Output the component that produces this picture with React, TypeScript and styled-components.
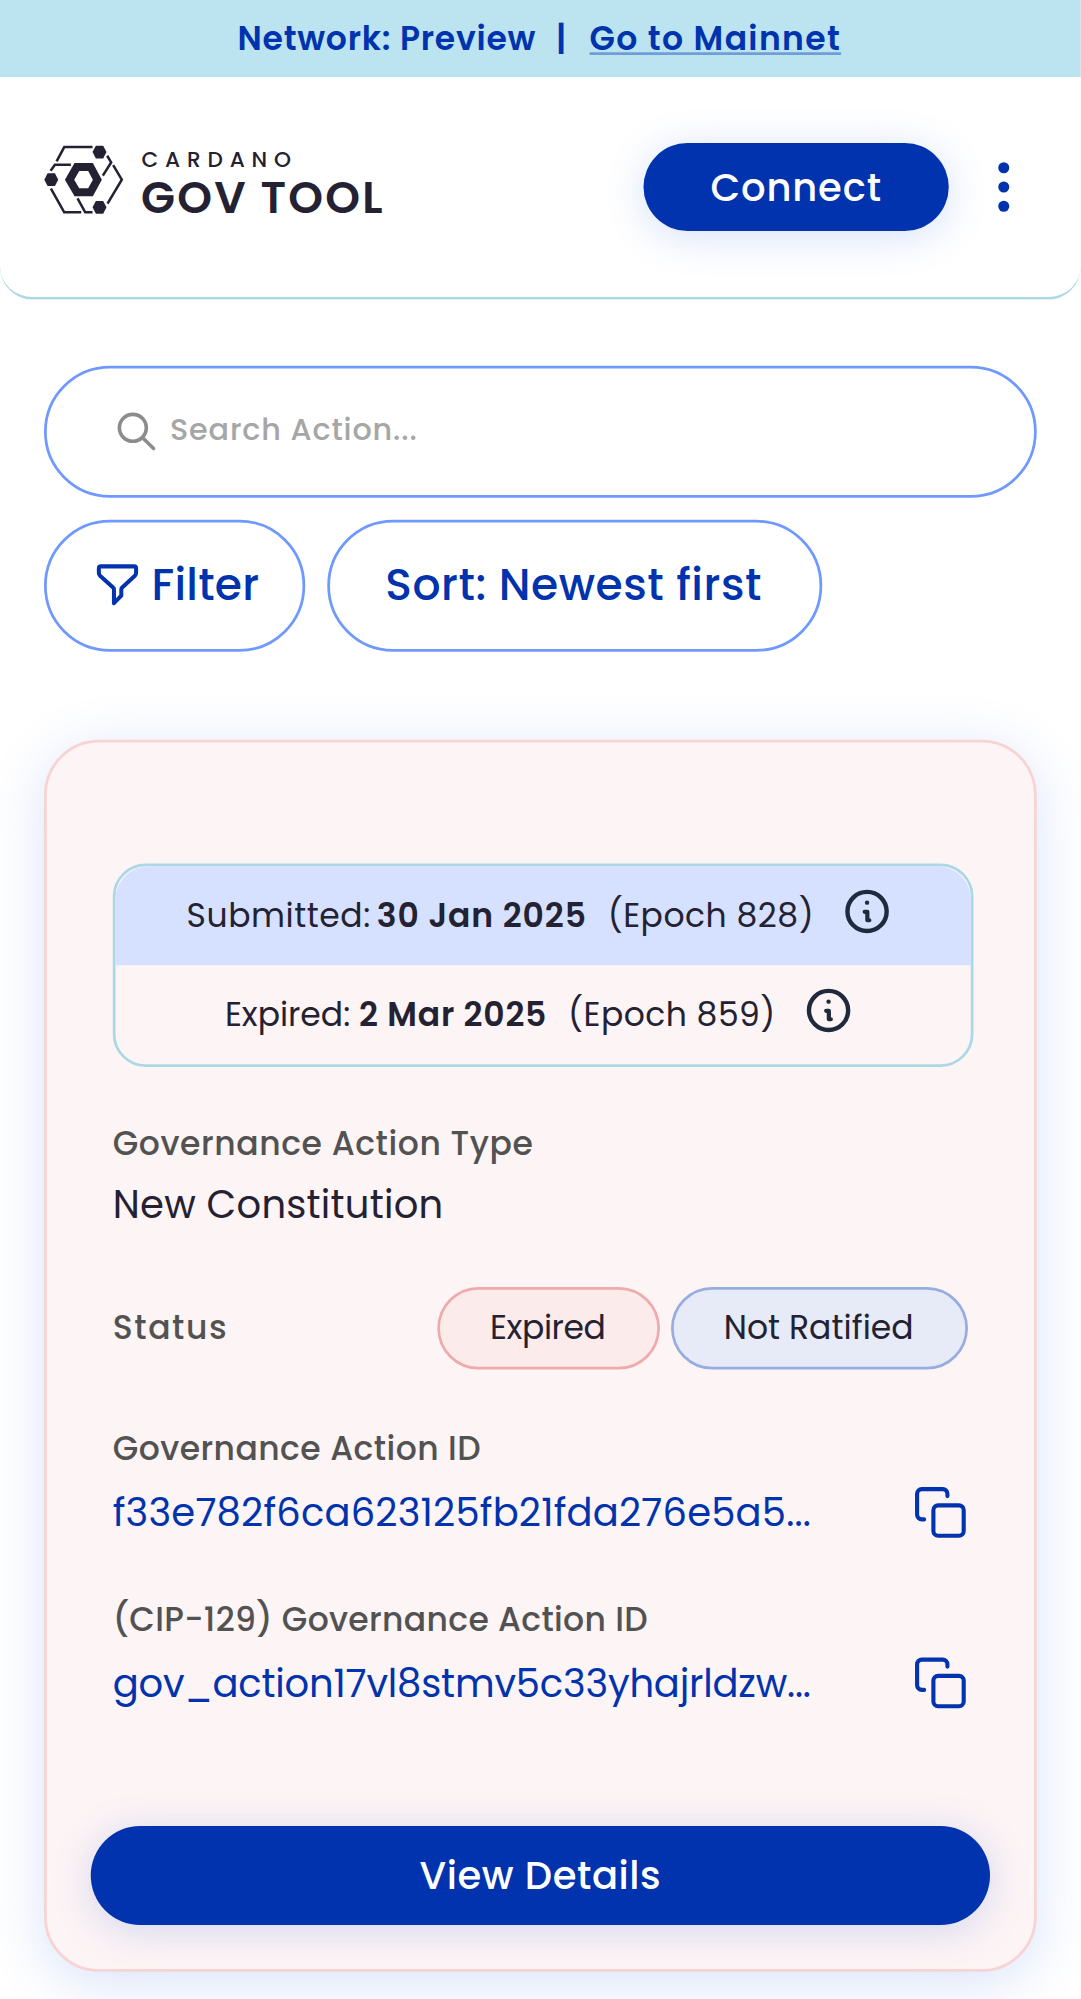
import React from "react";
import styled, { createGlobalStyle } from "styled-components";

const color = {
  primary: "#0033ad",
  ink: "#242232",
  label: "#525252",
  outline: "#6f99ff",
  sky: "#bbe4f0",
  skyBorder: "#aad9e5",
};

const GlobalStyle = createGlobalStyle`
  * { box-sizing: border-box; }
  html, body { margin: 0; padding: 0; background: #fff; }
  body {
    font-family: Poppins, Inter, "Open Sans", sans-serif;
    font-feature-settings: "cv11";
    color: ${color.ink};
  }
  button { font: inherit; font-feature-settings: inherit; border: 0; background: none; padding: 0; margin: 0; }
  svg { display: block; flex: none; overflow: visible; }
`;

const Viewport = styled.div`
  width: 1081px;
  height: 1999px;
  overflow: hidden;
`;

/* A 393px wide phone layout shown at 2.75 device pixels per pixel. */
const Page = styled.div`
  width: 393px;
  height: 727px;
  transform: scale(2.75);
  transform-origin: 0 0;
  background: #fff;
  font-size: 12px;
  line-height: 17px;
`;

/* Inline text with its own tracking. */
const Tracked = styled.span<{ $spacing: number }>`
  letter-spacing: ${(p) => p.$spacing}px;
  white-space: nowrap;
`;

const Banner = styled.div`
  display: flex;
  align-items: center;
  justify-content: center;
  height: 28px;
  padding: 0 0.8px 1px 0;
  background: ${color.sky};
  color: ${color.primary};
  font-weight: 600;
`;

const BannerLink = styled.a`
  letter-spacing: 0.49px;
  white-space: nowrap;
  text-decoration: underline;
  text-decoration-color: rgba(0, 51, 173, 0.4);
  text-decoration-skip-ink: none;
`;

const BannerDivider = styled.span`
  margin: 0 8.5px 0 7.2px;
`;

const Header = styled.header`
  display: flex;
  align-items: center;
  height: 81px;
  padding: 0 26px 0 16px;
  border-bottom: 1px solid ${color.skyBorder};
  border-radius: 0 0 12px 12px;
`;

const Logo = styled.div`
  align-self: flex-start;
  margin-right: auto;
  padding-top: 25px;
`;

const SolidButton = styled.button<{ $width: number; $height: number }>`
  width: ${(p) => p.$width}px;
  height: ${(p) => p.$height}px;
  border-radius: 50px;
  background: ${color.primary};
  color: #fff;
  font-size: 14px;
  line-height: 20px;
  font-weight: 500;
  box-shadow: 0 2px 15px rgba(47, 98, 220, 0.2);
`;

const MenuButton = styled.button`
  display: flex;
  flex-direction: column;
  align-items: center;
  gap: 3px;
  width: 4px;
  margin-left: 18px;
`;

const Dot = styled.span`
  width: 4px;
  height: 4px;
  border-radius: 50%;
  background: ${color.primary};
`;

const Main = styled.main`
  padding: 24px 16px 0;
`;

const SearchBox = styled.div`
  display: flex;
  align-items: center;
  gap: 4.9px;
  height: 48px;
  padding-left: 25.4px;
  border: 1px solid ${color.outline};
  border-radius: 24px;
`;

const Placeholder = styled.span`
  padding-bottom: 2px;
  color: #a6a6a6;
  font-size: 11px;
  line-height: 16px;
  font-weight: 500;
  letter-spacing: 0.31px;
`;

const Toolbar = styled.div`
  display: flex;
  gap: 8px;
  margin-top: 8px;
`;

const OutlineButton = styled.button<{ $width: number; $spacing: number; $padding: string }>`
  display: flex;
  align-items: center;
  justify-content: center;
  gap: 5.6px;
  width: ${(p) => p.$width}px;
  height: 48px;
  padding: ${(p) => p.$padding};
  border: 1px solid ${color.outline};
  border-radius: 24px;
  color: ${color.primary};
  font-size: 16px;
  line-height: 23px;
  font-weight: 500;
  letter-spacing: ${(p) => p.$spacing}px;
  white-space: nowrap;
  svg {
    margin-bottom: 1px;
  }
`;

const OutlineLabel = styled.span`
  padding-bottom: 1px;
`;

const Card = styled.article`
  height: 448px;
  margin-top: 32px;
  border: 1px solid #f7d4d3;
  border-radius: 20px;
  background: #fdf4f5;
  box-shadow: 0 4px 20px rgba(47, 98, 220, 0.18);
`;

const CardBody = styled.div`
  padding: 44px 22px 0 24px;
`;

const CardFooter = styled.div`
  padding: 42px 16px 0;
`;

const Dates = styled.div`
  height: 74px;
  border: 1px solid ${color.skyBorder};
  border-radius: 12px;
`;

const DateRow = styled.div<{ $filled?: boolean }>`
  display: flex;
  align-items: center;
  justify-content: center;
  height: 36px;
  padding: 0 4.2px 1px 0;
  border-radius: ${(p) => (p.$filled ? "12px 12px 0 0" : "0")};
  background: ${(p) => (p.$filled ? "#d6e1ff" : "transparent")};
  svg {
    margin-bottom: 2.5px;
  }
`;

const DateLabel = styled(Tracked)<{ $gap: number }>`
  margin-right: ${(p) => p.$gap}px;
`;

const DateValue = styled(Tracked)`
  margin-right: 7.6px;
  font-weight: 600;
`;

const Epoch = styled(Tracked)`
  margin-right: 10.9px;
`;

const Field = styled.section<{ $top: number }>`
  margin-top: ${(p) => p.$top}px;
`;

const Label = styled.div<{ $spacing: number }>`
  color: ${color.label};
  font-weight: 500;
  letter-spacing: ${(p) => p.$spacing}px;
  white-space: nowrap;
`;

const Value = styled.div<{ $spacing: number; $link?: boolean }>`
  color: ${(p) => (p.$link ? color.primary : color.ink)};
  font-size: 14px;
  line-height: 20px;
  letter-spacing: ${(p) => p.$spacing}px;
  white-space: nowrap;
`;

const ValueRow = styled.div<{ $gap: number }>`
  display: flex;
  align-items: center;
  justify-content: space-between;
  height: 20px;
  margin-top: ${(p) => p.$gap}px;
  padding-right: 2px;
`;

const StatusRow = styled.section`
  display: flex;
  align-items: center;
  gap: 4px;
  height: 30px;
  margin-top: 20px;
  padding-right: 2px;
  & > :first-child {
    margin-right: auto;
    padding-bottom: 1px;
  }
`;

const Pill = styled.span<{ $tone: "red" | "blue"; $width: number; $spacing: number }>`
  display: flex;
  align-items: center;
  justify-content: center;
  width: ${(p) => p.$width}px;
  height: 30px;
  padding-bottom: 1px;
  padding-right: 0.6px;
  border: 1px solid ${(p) => (p.$tone === "red" ? "#efabab" : "#98addf")};
  border-radius: 15px;
  background: ${(p) => (p.$tone === "red" ? "#fbebea" : "#e6ebf7")};
  letter-spacing: ${(p) => p.$spacing}px;
  white-space: nowrap;
`;

const hexagon = (cx: number, cy: number) =>
  `${cx - 21},${cy} ${cx - 11},${cy - 19} ${cx + 11},${cy - 19} ${cx + 21},${cy} ${cx + 11},${cy + 19} ${cx - 11},${cy + 19}`;

const LogoArt = () => (
  <svg width="124" height="24.7" viewBox="42 48 1023 204" fill="none">
    <path
      d="M133 100h55l27 50-27 50h-55l-29-50zM147 124l-15 26 15 26h27l14-26-14-26z"
      fill={color.ink}
      fillRule="evenodd"
    />
    <polygon points={hexagon(63, 150)} fill={color.ink} />
    <polygon points={hexagon(208, 67)} fill={color.ink} />
    <polygon points={hexagon(208, 233)} fill={color.ink} />
    <path
      d="M79 95l23-43h85M61 123l13-18h48M62 177l40 71h51M142 206l23 42h22M231 78l12 20-25 40M249 106l26 44-43 72"
      stroke={color.ink}
      strokeWidth="7.6"
    />
    <text x="334" y="111" fontSize="65" fontWeight="500" letterSpacing="20.6" fill={color.ink}>CARDANO</text>
    <text x="333" y="249" fontSize="133" fontWeight="600" letterSpacing="6.6" fill={color.ink}>GOV TOOL</text>
  </svg>
);

const SearchIcon = () => (
  <svg width="14.5" height="14.5" viewBox="-1.2 1.2 40 40" fill="none" stroke="#8c8c8a" strokeWidth="3.6" strokeLinecap="round">
    <circle cx="16.2" cy="16.6" r="13.5" />
    <path d="M26 26.5L37 37.3" />
  </svg>
);

const FilterIcon = () => (
  <svg width="15" height="15" viewBox="-0.6 -0.6 41 41" fill="none" stroke={color.primary} strokeWidth="4" strokeLinecap="round" strokeLinejoin="round">
    <path d="M4 2h33a2 2 0 0 1 2 2v4.6a4 4 0 0 1-1.2 2.8L25.2 23a3 3 0 0 0-.9 2.1V31L17 38.6V25a3 3 0 0 0-.9-2.1L3.2 11.4A4 4 0 0 1 2 8.6V4a2 2 0 0 1 2-2z" />
  </svg>
);

const InfoIcon = () => (
  <svg width="16" height="16" viewBox="-0.8 -1.2 44 44" fill="none" stroke="#1f2a3d" strokeLinecap="round" strokeLinejoin="round">
    <circle cx="22" cy="22" r="19.6" strokeWidth="4.4" />
    <circle cx="22" cy="13.2" r="2.2" fill="#1f2a3d" stroke="none" />
    <path d="M19.6 22.4h2.7v8.4h2" strokeWidth="4.2" />
  </svg>
);

const CopyIcon = () => (
  <svg width="20" height="20" viewBox="-2 -2 55 55" fill="none" stroke={color.primary} strokeWidth="4.1" strokeLinecap="round" strokeLinejoin="round">
    <rect x="18.4" y="18.4" width="30.3" height="30.3" rx="4.7" />
    <path d="M9.1 32.4H6.8A4.7 4.7 0 0 1 2.1 27.7V6.8A4.7 4.7 0 0 1 6.8 2.1h21A4.7 4.7 0 0 1 32.4 6.8v2.3" />
  </svg>
);

export default function App() {
  return (
    <Viewport>
      <GlobalStyle />
      <Page>
        <Banner>
          <Tracked $spacing={0.28}>Network: Preview</Tracked>
          <BannerDivider>|</BannerDivider>
          <BannerLink>Go to Mainnet</BannerLink>
        </Banner>
        <Header>
          <Logo>
            <LogoArt />
          </Logo>
          <SolidButton $width={111} $height={32}>
            <Tracked $spacing={0.31}>Connect</Tracked>
          </SolidButton>
          <MenuButton aria-label="Menu">
            <Dot />
            <Dot />
            <Dot />
          </MenuButton>
        </Header>
        <Main>
          <SearchBox>
            <SearchIcon />
            <Placeholder>Search Action...</Placeholder>
          </SearchBox>
          <Toolbar>
            <OutlineButton $width={95} $spacing={0.09} $padding="0 0 0 1.8px">
              <FilterIcon />
              <OutlineLabel>Filter</OutlineLabel>
            </OutlineButton>
            <OutlineButton $width={180} $spacing={0.2} $padding="0 0.8px 0 0">
              <OutlineLabel>Sort: Newest first</OutlineLabel>
            </OutlineButton>
          </Toolbar>
          <Card>
            <CardBody>
              <Dates>
                <DateRow $filled>
                  <DateLabel $spacing={0.2} $gap={2.2}>Submitted:</DateLabel>
                  <DateValue $spacing={0.32}>30 Jan 2025</DateValue>
                  <Epoch $spacing={0.185}>(Epoch 828)</Epoch>
                  <InfoIcon />
                </DateRow>
                <DateRow>
                  <DateLabel $spacing={0} $gap={3.2}>Expired:</DateLabel>
                  <DateValue $spacing={0.28}>2 Mar 2025</DateValue>
                  <Epoch $spacing={0.17}>(Epoch 859)</Epoch>
                  <InfoIcon />
                </DateRow>
              </Dates>
              <Field $top={19}>
                <Label $spacing={0.21}>Governance Action Type</Label>
                <ValueRow $gap={4}>
                  <Value $spacing={0.09}>New Constitution</Value>
                </ValueRow>
              </Field>
              <StatusRow>
                <Label $spacing={0.58}>Status</Label>
                <Pill $tone="red" $width={81} $spacing={-0.15}>Expired</Pill>
                <Pill $tone="blue" $width={108} $spacing={0.02}>Not Ratified</Pill>
              </StatusRow>
              <Field $top={20}>
                <Label $spacing={0.16}>Governance Action ID</Label>
                <ValueRow $gap={5}>
                  <Value $link $spacing={0.07}>f33e782f6ca623125fb21fda276e5a5...</Value>
                  <CopyIcon />
                </ValueRow>
              </Field>
              <Field $top={20}>
                <Label $spacing={0.12}>(CIP-129) Governance Action ID</Label>
                <ValueRow $gap={5}>
                  <Value $link $spacing={-0.07}>gov_action17vl8stmv5c33yhajrldzw...</Value>
                  <CopyIcon />
                </ValueRow>
              </Field>
            </CardBody>
            <CardFooter>
              <SolidButton $width={327} $height={36}>
                <Tracked $spacing={0.21}>View Details</Tracked>
              </SolidButton>
            </CardFooter>
          </Card>
        </Main>
      </Page>
    </Viewport>
  );
}
